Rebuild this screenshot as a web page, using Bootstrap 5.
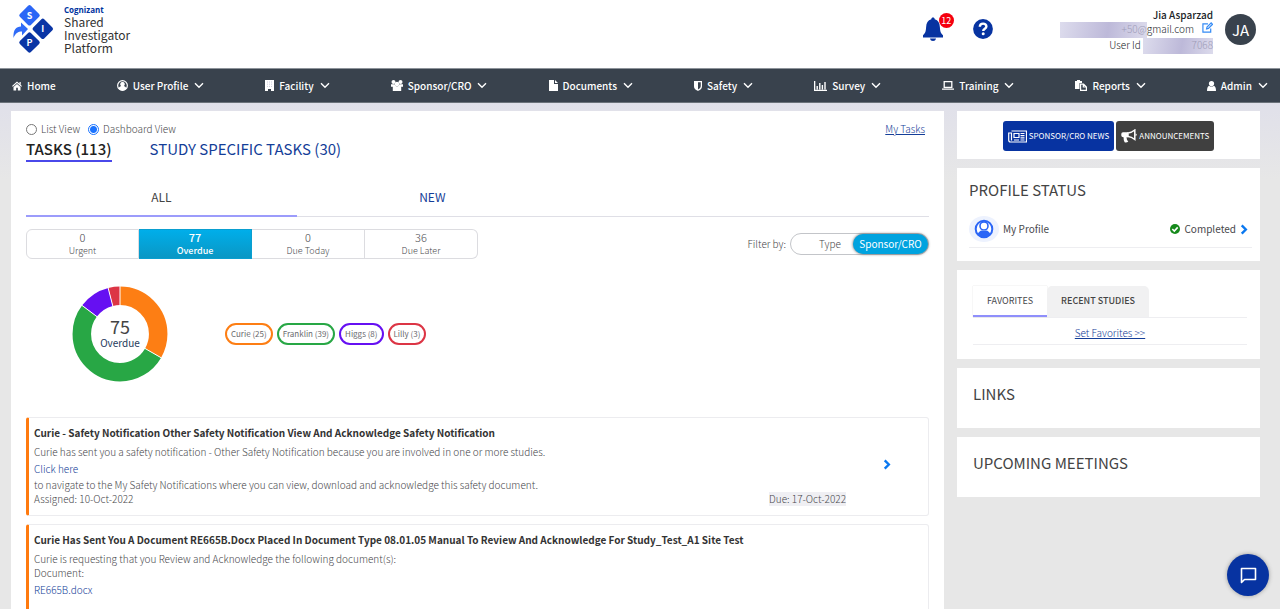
<!DOCTYPE html>
<html lang="en">
<head>
<meta charset="utf-8">
<meta name="viewport" content="width=device-width, initial-scale=1">
<title>Shared Investigator Platform</title>
<link href="https://cdn.jsdelivr.net/npm/bootstrap@5.3.0/dist/css/bootstrap.min.css" rel="stylesheet">
<style>
:root{--navy:#0033a0;--ink:#333;--soft:#48484c;--linkblue:#143e98;--slate:#39424d}
body{font-family:"Noto Sans CJK SC","Source Sans Pro",sans-serif;font-size:10px;line-height:14px;font-weight:300;color:var(--soft);background:#e7e7e7}
button{font-family:inherit;font-weight:inherit}
a{color:var(--linkblue)}
svg{display:block;flex:none}
.shell{background:linear-gradient(#e0e0ea 100px,#e7e7e7 180px)}
.topbar{height:68px;padding:4px 24px 0 12px}
.brandname{font-size:12px;line-height:13px;font-weight:400;color:#333}
.brandname b{display:block;font-size:8px;line-height:11px;color:var(--navy);font-family:"Open Sans","Noto Sans CJK SC",sans-serif;font-weight:700}
.userbox{padding:4px 0 0 43px}
.username{font-weight:500}
.bellcount{top:-3px;right:-5px;width:15px;height:15px;background:#f5000f;font-size:9px;line-height:15px;font-weight:400}
.redact{background:linear-gradient(100deg,#dddced,#bdb9d9 55%,#dcdbec);height:16px;color:#a09db8;text-align:right}
.avatar{width:31px;height:31px;background:var(--slate);font-size:15px;line-height:31px;font-weight:400;margin-top:10px}
.mainnav{height:35px;background:var(--slate);border-top:1px solid #8d939a;border-bottom:1px solid #6b727a;padding:0 12px}
.mainnav a{color:#fff;font-size:10px;font-weight:500;gap:5px}
.mainnav .chev{margin-left:1px}
.content{padding:8px 20px 0 11px;gap:13px}
.panel{background:#fff}
.mainpanel{padding:11px 15px 0;min-width:0}
.sidecol{width:303px;flex:none;gap:9px}
.form-check-input{width:11px;height:11px;margin:0;border-color:#777}
.form-check-input:checked{background-color:#fff;border-color:#1a73ff;background-image:radial-gradient(circle,#1a73ff 0 3px,#fff 4px)}
.bare{background:none;border:0;padding:0}
.bigtab{font-size:15px;line-height:22px;font-weight:400;color:var(--linkblue);border-bottom:2px solid transparent}
.bigtab.on{color:#222;font-weight:500;border-color:#4a48ea}
.tabrow{gap:38px;margin-top:2px}
.subtabs{border-bottom:1px solid #dfdfe6;margin-top:24px}
.subtabs button{width:30%;font-size:12px;line-height:18px;font-weight:400;padding:2px 0 9px;color:var(--linkblue);border-bottom:2px solid transparent;margin-bottom:-1px}
.subtabs button.on{color:#444;border-color:#9c9cfb}
.stat{width:113px;height:30px;border:1px solid #dcdce0;background:#fff;color:var(--soft);padding:0;line-height:13px;font-size:9px}
.stat + .stat{border-left:0}
.stat span{display:block;font-size:11px}
.stat.on{background:linear-gradient(#00aeea,#0a97c4);border-color:#0a9fd0;color:#fff;font-weight:500}
.filterpill{border:1px solid #c3c5c9;border-radius:12px;height:22px;width:139px}
.filterpill button{font-size:10px;line-height:18px;color:var(--soft)}
.filterpill .on{background:#00a3df;color:#fff;font-weight:400;border-radius:10px;box-shadow:0 0 3px #555;width:75px}
.chartrow{margin:27px 0 35px 46px;gap:57px}
.donut{width:96px}
.donutlabel{inset:0;line-height:16px;font-weight:400;color:#1d3a5c;font-size:10px}
.donutlabel span{font-size:18px;line-height:18px;color:#444}
.chip{border:2px solid;border-radius:11px;height:22px;font-size:8px;line-height:18px;font-weight:400;padding:0 4px;background:#fff}
.chip span{color:#6a6a6e}
.task{border:1px solid #ececef;border-left:3px solid #ff7a0e;border-radius:3px;padding:5px 0 9px 5px}
.task h3{font-size:10px;line-height:20px;font-weight:700;color:var(--ink);margin:0 0 2px}
.task .golink{line-height:19px;text-decoration:none}
.due{background:#efeff3}
.arrowcol{width:82px}
.sidehead{font-size:15px;line-height:20px;font-weight:400;color:#444;margin:0}
.newsrow{padding:10px 0 8px;gap:2px}
.newsbtn{height:30px;font-size:8px;line-height:14px;font-weight:400;border-radius:3px;color:#fff;border:0;padding:0 5px;gap:2px}
.profile{padding:12px 8px 13px 8px}
.profilerow{font-weight:400;padding:10px 4px 5px 0;margin-top:6px}
.favs{padding:16px 13px 14px 16px}
.favtab{font-size:9px;line-height:14px;padding:8px 14px 7px;color:var(--soft);border-bottom:2px solid transparent;font-weight:400}
.favtab.on{border-bottom-color:#8f8ffb;box-shadow:0 0 1px #ccc}
.favtab.off{background:#f1f1f2;color:#444;font-weight:500;border-radius:5px 5px 0 0}
.hair{border-bottom:1px solid #eeeef1}
.chatbtn{right:11px;bottom:13px;width:42px;height:42px;background:#0733a1;box-shadow:0 0 4px #999}
</style>
</head>
<body>
<svg width="0" height="0" class="position-absolute" aria-hidden="true">
<symbol id="chev" viewBox="0 0 10 7"><path d="M1 1.2 5 5.2 9 1.2" fill="none" stroke="currentColor" stroke-width="1.4"/></symbol>
<symbol id="right" viewBox="0 0 8 12"><path d="M1.5 1.5 6 6 1.5 10.5" fill="none" stroke="#0a78f0" stroke-width="2.6"/></symbol>
</svg>
<div class="shell vh-100 d-flex flex-column overflow-hidden">
<header class="topbar bg-white d-flex align-items-start flex-shrink-0">
  <a href="#" class="d-flex text-decoration-none gap-2" aria-label="Shared Investigator Platform home">
    <svg width="44" height="50" viewBox="0 0 44 50">
      <rect x="9.700" y="3.500" width="15.600" height="15.600" rx="2" fill="#2b66f6" transform="rotate(45 17.500 11.300)"/>
      <rect x="23" y="17" width="15.600" height="15.600" rx="2" fill="#0a35a5" transform="rotate(45 30.800 24.800)"/>
      <rect x="9.700" y="30.700" width="15.600" height="15.600" rx="2" fill="#0a35a5" transform="rotate(45 17.500 38.500)"/>
      <path d="M1.500 34C1 26 4 22.500 9 22.500V18.500L16 25 10 31.500V27.500C6 27.500 3.500 29 1.500 34Z" fill="#2f6bf7"/>
      <g fill="#fff" font-size="9" font-weight="700" text-anchor="middle"><text x="17.500" y="14.500">S</text><text x="30.800" y="28">I</text><text x="17.500" y="42">P</text></g>
    </svg>
    <span class="brandname"><b>Cognizant</b>Shared<br>Investigator<br>Platform</span>
  </a>
  <div class="ms-auto d-flex align-items-center pt-2 mt-1">
    <button class="bare position-relative me-4" aria-label="Notifications, 12 new">
      <svg width="24" height="26" viewBox="0 0 24 26" class="me-1"><path d="M12 1.500c1 0 1.700.7 1.700 1.700 3.500 1 5 3.700 5.200 8 .2 4.500 1 6 3.100 8v2.300H2v-2.300c2.100-2 2.900-3.500 3.100-8 .2-4.300 1.700-7 5.200-8 0-1 .7-1.700 1.700-1.700ZM9 22.500h6c-.3 1.700-1.400 2.500-3 2.500s-2.700-.8-3-2.500Z" fill="#0733a1"/></svg>
      <span class="bellcount position-absolute rounded-circle text-white">12</span>
    </button>
    <button class="bare" aria-label="Help">
      <svg width="20" height="20" viewBox="0 0 20 20"><circle cx="10" cy="10" r="9.900" fill="#0733a1"/><path d="M6.800 7.700C6.900 5.500 8.200 4.600 10.100 4.600 12 4.600 13.400 5.700 13.400 7.400 13.400 9.700 10.200 9.600 10.200 12" fill="none" stroke="#fff" stroke-width="2.400"/><circle cx="10.200" cy="14.700" r="1.500" fill="#fff"/></svg>
    </button>
  </div>
  <div class="userbox d-flex flex-column align-items-end text-dark ms-4 me-2">
    <span class="username">Jia Asparzad</span>
    <span class="d-flex"><span class="redact" style="width:87px">+50@</span>gmail.com
      <a href="#" class="ms-2" aria-label="Edit profile"><svg width="11" height="11" viewBox="0 0 12 12"><path d="M6.500 2H1v9h8.500V7M5 7.500 5.500 5.500 10 1 11.500 2.500 7 7Z" fill="none" stroke="#338af5" stroke-width="1.300"/></svg></a></span>
    <span class="d-flex">User Id&nbsp;<span class="redact" style="width:70px">7068</span></span>
  </div>
  <div class="avatar rounded-circle text-white text-center ms-1">JA</div>
</header>

<nav class="mainnav d-flex align-items-center justify-content-between flex-shrink-0" aria-label="Main">
  <a href="#" class="d-flex align-items-center text-decoration-none"><svg width="10" height="10" viewBox="0 0 12 11" fill="#fff"><path d="M6 0 12 5.500 11 6.500 6 2 1 6.500 0 5.500ZM9 .8h1.500V4L9 2.800ZM6 3l4.200 3.700V11H7V7.500H5V11H1.800V6.700Z"/></svg>Home</a>
  <a href="#" class="d-flex align-items-center text-decoration-none"><svg width="11" height="11" viewBox="0 0 12 12"><circle cx="6" cy="6" r="5.300" fill="none" stroke="#fff" stroke-width="1.300"/><path d="M6 2.300a2.300 2.300 0 0 1 1.500 4.200C9 7 10 8 10.300 9.500 8 12 4 12 1.700 9.500 2 8 3 7 4.500 6.500A2.300 2.300 0 0 1 6 2.300Z" fill="#fff"/></svg>User Profile<svg class="chev" width="10" height="7"><use href="#chev"/></svg></a>
  <a href="#" class="d-flex align-items-center text-decoration-none"><svg width="9" height="11" viewBox="0 0 9 11"><path d="M0 0h9v11H6V9H3v2H0Z" fill="#fff"/><path d="M2 2h5M2 4.200h5M2 6.400h5" stroke="#ccd" stroke-dasharray="1 1"/></svg>Facility<svg class="chev" width="10" height="7"><use href="#chev"/></svg></a>
  <a href="#" class="d-flex align-items-center text-decoration-none"><svg width="12" height="11" viewBox="0 0 12 11" fill="#fff"><circle cx="2.500" cy="2" r="2"/><circle cx="9.500" cy="2" r="2"/><circle cx="6" cy="4" r="2.300"/><path d="M0 4.300h3.500L5 6.200h2l1.500-1.900H12v2.500h-1.800V11H1.800V6.800H0Z"/></svg>Sponsor/CRO<svg class="chev" width="10" height="7"><use href="#chev"/></svg></a>
  <a href="#" class="d-flex align-items-center text-decoration-none"><svg width="9" height="11" viewBox="0 0 9 11" fill="#fff"><path d="M0 0h5v4h4v7H0ZM6 0l3 3H6Z"/></svg>Documents<svg class="chev" width="10" height="7"><use href="#chev"/></svg></a>
  <a href="#" class="d-flex align-items-center text-decoration-none"><svg width="8" height="10" viewBox="0 0 9 11"><path d="M.7.700h7.600v5C8.300 8 6.500 9.500 4.500 10.300 2.500 9.500.7 8 .7 5.700Z" fill="none" stroke="#fff" stroke-width="1.400"/><path d="M.7.700h3.800v9.600C2.500 9.500.7 8 .7 5.700Z" fill="#fff"/></svg>Safety<svg class="chev" width="10" height="7"><use href="#chev"/></svg></a>
  <a href="#" class="d-flex align-items-center text-decoration-none"><svg width="13" height="10" viewBox="0 0 13 10"><path d="M.6 0v9.400H13M3.200 8.500V5M5.800 8.500V2M8.400 8.500V4M11 8.500V1" fill="none" stroke="#fff" stroke-width="1.400"/></svg>Survey<svg class="chev" width="10" height="7"><use href="#chev"/></svg></a>
  <a href="#" class="d-flex align-items-center text-decoration-none"><svg width="12" height="9" viewBox="0 0 12 9"><path d="M2.200.700h7.600v5.600H2.200ZM0 8.200h12" fill="none" stroke="#fff" stroke-width="1.300"/></svg>Training<svg class="chev" width="10" height="7"><use href="#chev"/></svg></a>
  <a href="#" class="d-flex align-items-center text-decoration-none"><svg width="12" height="11" viewBox="0 0 12 11"><path d="M0 1h2V0h3v1h2v2H4.500v6H0Z" fill="#fff"/><path d="M5.600 4.100h3L11.400 7v3.400H5.600ZM8.300 4v3h3" fill="none" stroke="#fff" stroke-width="1.200"/></svg>Reports<svg class="chev" width="10" height="7"><use href="#chev"/></svg></a>
  <a href="#" class="d-flex align-items-center text-decoration-none"><svg width="9" height="10" viewBox="0 0 9 10" fill="#fff"><circle cx="4.500" cy="2.600" r="2.600"/><path d="M2 4.700Q4.500 6.500 7 4.700 9 5.500 9 10H0Q0 5.500 2 4.700Z"/></svg>Admin<svg class="chev" width="10" height="7"><use href="#chev"/></svg></a>
</nav>

<div class="content d-flex flex-grow-1">
  <main class="mainpanel panel flex-grow-1">
    <div class="d-flex align-items-center">
      <input class="form-check-input" type="radio" name="view" id="listView"><label for="listView" class="ms-1">List View</label>
      <input class="form-check-input ms-2" type="radio" name="view" id="dashView" checked><label for="dashView" class="ms-1">Dashboard View</label>
      <a href="#" class="ms-auto me-1">My Tasks</a>
    </div>
    <div class="d-flex tabrow">
      <button class="bare bigtab on">TASKS (113)</button>
      <button class="bare bigtab">STUDY SPECIFIC TASKS (30)</button>
    </div>
    <div class="subtabs d-flex">
      <button class="bare on">ALL</button><button class="bare">NEW</button>
    </div>
    <div class="d-flex align-items-end mt-2 pt-1">
      <button class="stat rounded-start"><span>0</span>Urgent</button>
      <button class="stat on"><span>77</span>Overdue</button>
      <button class="stat"><span>0</span>Due Today</button>
      <button class="stat rounded-end"><span>36</span>Due Later</button>
      <div class="ms-auto d-flex align-items-center pb-1 mt-1"><span class="me-1">Filter by:</span>
      <div class="filterpill d-flex" role="group">
        <button class="bare flex-grow-1 ps-3">Type</button><button class="bare on">Sponsor/CRO</button>
      </div></div>
    </div>
    <div class="chartrow d-flex align-items-center">
      <div class="donut position-relative">
        <svg width="96" height="96" viewBox="0 0 96 96">
          <g fill="none" stroke-width="18.500" transform="rotate(-90 48 48)">
            <circle cx="48" cy="48" r="38.200" pathLength="75" stroke="#fd7e14" stroke-dasharray="25 50"/>
            <circle cx="48" cy="48" r="38.200" pathLength="75" stroke="#28a745" stroke-dasharray="39 36" stroke-dashoffset="-25"/>
            <circle cx="48" cy="48" r="38.200" pathLength="75" stroke="#6610f2" stroke-dasharray="8 67" stroke-dashoffset="-64"/>
            <circle cx="48" cy="48" r="38.200" pathLength="75" stroke="#dc3545" stroke-dasharray="3 72" stroke-dashoffset="-72"/>
          </g>
          <path d="M48 20V0M72.200 62 89.600 72M25.700 31.200 9.700 19.200M41 20.800 36 1.500" stroke="#fff" stroke-width="1"/>
        </svg>
        <div class="donutlabel position-absolute d-flex flex-column align-items-center justify-content-center"><span>75</span>Overdue</div>
      </div>
      <div class="d-flex gap-1">
        <button class="chip" style="border-color:#fd7e14"><span>Curie (25)</span></button>
        <button class="chip" style="border-color:#28a745"><span>Franklin (39)</span></button>
        <button class="chip" style="border-color:#6610f2"><span>Higgs (8)</span></button>
        <button class="chip" style="border-color:#dc3545"><span>Lilly (3)</span></button>
      </div>
    </div>
    <article class="task d-flex mb-2">
      <div class="flex-grow-1">
        <h3>Curie - Safety Notification Other Safety Notification View And Acknowledge Safety Notification</h3>
        <div>Curie has sent you a safety notification - Other Safety Notification because you are involved in one or more studies.</div>
        <a href="#" class="golink d-block">Click here</a>
        <div>to navigate to the My Safety Notifications where you can view, download and acknowledge this safety document.</div>
        <div>Assigned: 10-Oct-2022</div>
      </div>
      <span class="due align-self-end text-nowrap">Due: 17-Oct-2022</span>
      <a href="#" class="arrowcol d-flex align-items-center justify-content-center" aria-label="Open task"><svg width="8" height="11"><use href="#right"/></svg></a>
    </article>
    <article class="task">
      <h3>Curie Has Sent You A Document RE665B.Docx Placed In Document Type 08.01.05 Manual To Review And Acknowledge For Study_Test_A1 Site Test</h3>
      <div>Curie is requesting that you Review and Acknowledge the following document(s):</div>
      <div>Document:</div>
      <a href="#" class="golink d-block mb-4">RE665B.docx</a>
    </article>
  </main>

  <aside class="sidecol d-flex flex-column">
    <section class="panel newsrow d-flex justify-content-center">
      <button class="newsbtn d-flex align-items-center" style="background:#0733a1"><svg width="19" height="13" viewBox="0 0 19 13"><path d="M3.500 1h15v11H2.500Q.7 12 .7 10V3h2.800V10.500" fill="none" stroke="#fff" stroke-width="1.200"/><path d="M6 3.500h5v4H6ZM6 10h5M12.500 3.500h4M12.500 5.700h4M12.500 7.900h4M12.500 10h4" fill="none" stroke="#fff" stroke-width="1.200"/></svg>SPONSOR/CRO NEWS</button>
      <button class="newsbtn d-flex align-items-center" style="background:#404040"><svg width="16" height="14" viewBox="0 0 16 14"><path d="M13.800 1v9.500Q10.500 7.800 7 7.500V4Q10.500 3.700 13.800 1Z" fill="none" stroke="#fff" stroke-width="1.500"/><path d="M7 3.200v5H5.500q0 2.600 1.800 4.200-1.500 1.400-3.700.8-1.200-2.200-1-5Q.3 8.300.3 6.500V5Q.3 3.200 2 3.200ZM14.500 4.500q1.300.3 1.300 1.300t-1.300 1.300Z" fill="#fff"/></svg>ANNOUNCEMENTS</button>
    </section>
    <section class="panel profile">
      <h2 class="sidehead px-1">PROFILE STATUS</h2>
      <div class="profilerow d-flex align-items-center hair ms-1">
        <svg width="30" height="26" viewBox="0 0 30 26"><ellipse cx="15" cy="13" rx="15" ry="13" fill="#edf2fe"/><circle cx="15" cy="13" r="8.300" fill="#fff" stroke="#2b66f6" stroke-width="2"/><circle cx="15" cy="10" r="4" fill="#fff" stroke="#2b66f6" stroke-width="1.600"/><path d="M8.500 18.500Q10 14.800 13 14.500 15 15.500 17 14.500 20 14.800 21.500 18.500 15 24.500 8.500 18.500Z" fill="#2b66f6"/></svg>
        <span class="ms-1">My Profile</span>
        <svg class="ms-auto me-1" width="10" height="10" viewBox="0 0 10 10"><circle cx="5" cy="5" r="5" fill="#168a1c"/><path d="M2.300 5 4.300 7 7.700 3.400" fill="none" stroke="#fff" stroke-width="1.600"/></svg>
        <span class="me-1">Completed</span><svg width="8" height="11"><use href="#right"/></svg>
      </div>
    </section>
    <section class="panel favs">
      <div class="d-flex hair">
        <button class="bare favtab on">FAVORITES</button><button class="bare favtab off">RECENT STUDIES</button>
      </div>
      <div class="text-center hair pt-2 pb-1"><a href="#">Set Favorites &gt;&gt;</a></div>
    </section>
    <section class="panel p-3 pb-4"><h2 class="sidehead">LINKS</h2></section>
    <section class="panel p-3 pb-4"><h2 class="sidehead">UPCOMING MEETINGS</h2></section>
  </aside>
</div>
</div>
<button class="chatbtn bare position-fixed rounded-circle d-flex align-items-center justify-content-center" aria-label="Open chat"><svg width="17" height="17" viewBox="0 0 17 17"><path d="M1.500 15.500V1.500h14v11h-11Z" fill="none" stroke="#fff" stroke-width="1.600" stroke-linejoin="round"/></svg></button>
<script src="https://cdn.jsdelivr.net/npm/bootstrap@5.3.0/dist/js/bootstrap.bundle.min.js"></script>
</body>
</html>
